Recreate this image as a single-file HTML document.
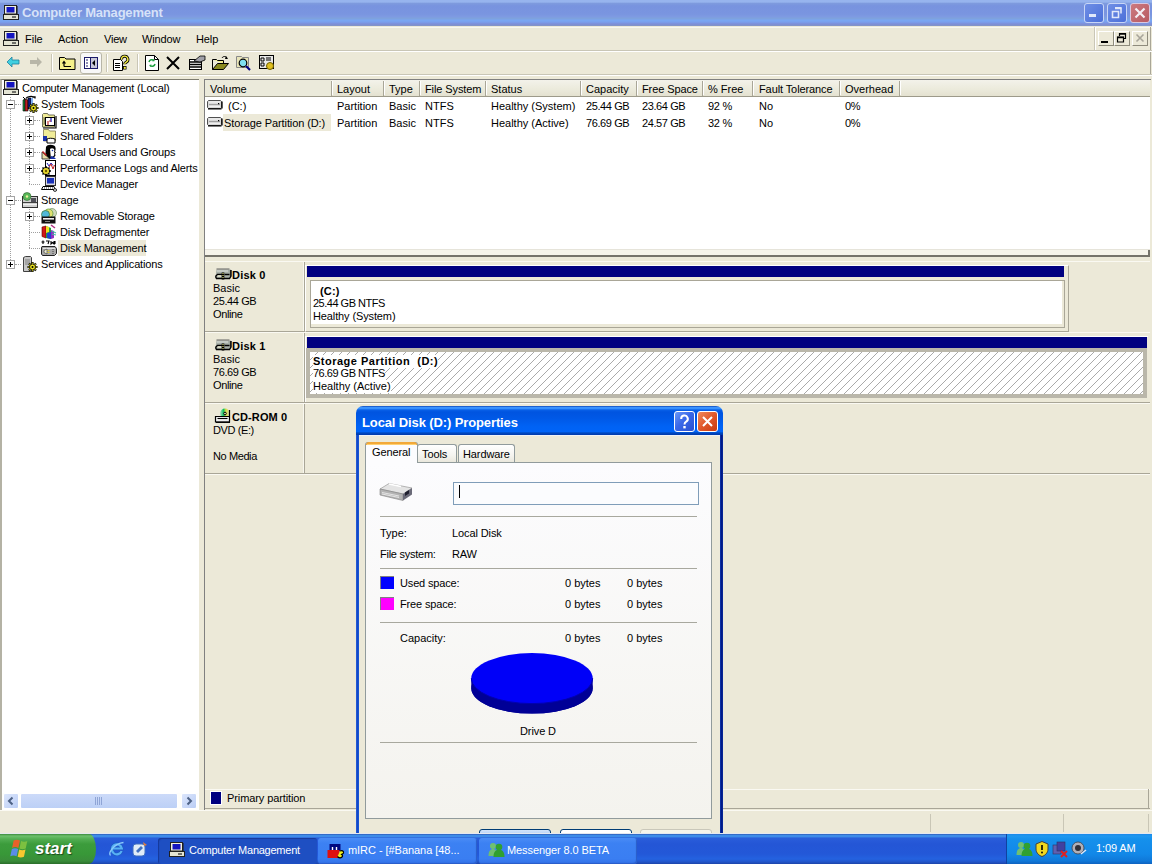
<!DOCTYPE html>
<html><head><meta charset="utf-8">
<style>
*{margin:0;padding:0;box-sizing:border-box}
html,body{width:1152px;height:864px;overflow:hidden;background:#ECE9D8;font-family:"Liberation Sans",sans-serif;font-size:11px;color:#000;position:relative}
.a{position:absolute}
.t{position:absolute;white-space:nowrap;line-height:13px}
.b{font-weight:bold}
svg{position:absolute;overflow:visible}
</style></head><body>
<!-- ============ TITLE BAR ============ -->
<div class="a" style="left:0;top:0;width:1152px;height:26px;background:linear-gradient(#97B4EE 0px,#97B4EE 2px,#7E9ADE 3.5px,#7893DF 6px,#7A95E0 14px,#7E9AE2 16.5px,#7EA2DE 18.5px,#7AA6F2 20.5px,#7AA0EE 22px,#7E8ED8 24px,#8496C4 26px)"></div>
<svg style="left:3px;top:5px" width="16" height="16" viewBox="0 0 16 16"><rect x="1.5" y="0.5" width="12" height="8.5" fill="#F0F0E0" stroke="#202020"/><path d="M14 1v8.5" stroke="#202020" stroke-width="1.2"/><rect x="3.5" y="2" width="8" height="5.5" fill="#1414C0"/><rect x="0.5" y="9.5" width="15" height="5" fill="#E4E4D4" stroke="#202020"/><path d="M9 12h4" stroke="#202020" stroke-width="1.2"/></svg>
<div class="t b" style="left:22px;top:5px;font-size:13px;line-height:16px;color:#D6E2F8;letter-spacing:-0.2px">Computer Management</div>
<div class="a" style="left:1084px;top:3px;width:20px;height:20px;border:1px solid #C8D6F6;border-radius:3px;background:linear-gradient(135deg,#6F8FE6,#4B6FD8)"></div>
<div class="a" style="left:1089px;top:14px;width:7px;height:3px;background:#E0E8FA"></div>
<div class="a" style="left:1107px;top:3px;width:20px;height:20px;border:1px solid #C8D6F6;border-radius:3px;background:linear-gradient(135deg,#6F8FE6,#4B6FD8)"></div>
<svg style="left:1110px;top:6px" width="14" height="14" viewBox="0 0 14 14"><path d="M5 2.5h6v5M2.5 5.5h6v6h-6z" fill="none" stroke="#E0E8FA" stroke-width="1.6"/><path d="M5 1.8h6.6" stroke="#E0E8FA" stroke-width="1.6"/></svg>
<div class="a" style="left:1130px;top:3px;width:20px;height:20px;border:1px solid #D8C8E0;border-radius:3px;background:linear-gradient(135deg,#CC7A80,#B85A62)"></div>
<svg style="left:1133px;top:6px" width="14" height="14" viewBox="0 0 14 14"><path d="M2.5 2.5l9 9M11.5 2.5l-9 9" stroke="#F4EEF4" stroke-width="2.2"/></svg>

<!-- ============ MENU BAR ============ -->
<div class="a" style="left:0;top:26px;width:1152px;height:25px;background:#ECE9D8;border-bottom:1px solid #C9C6B6"></div><div class="a" style="left:0;top:26.5px;width:1152px;height:1.5px;background:#F8F8F0"></div>
<div class="a" style="left:0;top:51px;width:1152px;height:1px;background:#FFF"></div>
<svg style="left:3px;top:31px" width="16" height="16" viewBox="0 0 16 16"><rect x="1.5" y="0.5" width="12" height="8.5" fill="#F0F0E0" stroke="#202020"/><path d="M14 1v8.5" stroke="#202020" stroke-width="1.2"/><rect x="3.5" y="2" width="8" height="5.5" fill="#1414C0"/><rect x="0.5" y="9.5" width="15" height="5" fill="#E4E4D4" stroke="#202020"/><path d="M9 12h4" stroke="#202020" stroke-width="1.2"/></svg>
<div class="t" style="left:25px;top:33px">File</div>
<div class="t" style="left:58px;top:33px;letter-spacing:-0.1px">Action</div>
<div class="t" style="left:104px;top:33px;letter-spacing:-0.2px">View</div>
<div class="t" style="left:142px;top:33px;letter-spacing:-0.15px">Window</div>
<div class="t" style="left:196px;top:33px;letter-spacing:-0.1px">Help</div>
<div class="a" style="left:1094px;top:27px;width:1px;height:23px;background:#C9C6B6"></div>
<div class="a" style="left:1095px;top:27px;width:1px;height:23px;background:#FFF"></div>
<!-- mdi buttons -->
<div class="a" style="left:1098px;top:31px;width:16px;height:15px;border-right:1px solid #8E8B7C;border-bottom:1px solid #8E8B7C;border-top:1px solid #fff;border-left:1px solid #fff"></div>
<div class="a" style="left:1101px;top:41px;width:7px;height:2px;background:#000"></div>
<div class="a" style="left:1114px;top:31px;width:16px;height:15px;border-right:1px solid #8E8B7C;border-bottom:1px solid #8E8B7C;border-top:1px solid #fff;border-left:1px solid #fff"></div>
<svg style="left:1116px;top:33px" width="12" height="11" viewBox="0 0 12 11"><path d="M3.5 3V0.5h6v5H7.5M1.5 4h6v5h-6z" fill="none" stroke="#000" stroke-width="1.2"/><path d="M3 1h7M1 4.5h7" stroke="#000" stroke-width="1.5"/></svg>
<div class="a" style="left:1132px;top:31px;width:16px;height:15px;border-right:1px solid #8E8B7C;border-bottom:1px solid #8E8B7C;border-top:1px solid #fff;border-left:1px solid #fff"></div>
<svg style="left:1135px;top:33px" width="10" height="10" viewBox="0 0 10 10"><path d="M1.5 1.5l7 7M8.5 1.5l-7 7" stroke="#A8A59A" stroke-width="1.6"/></svg>

<!-- ============ TOOLBAR ============ -->
<div class="a" style="left:1150px;top:27px;width:1px;height:23px;background:#A9A697"></div><div class="a" style="left:1150px;top:52px;width:1px;height:22px;background:#A9A697"></div>
<div class="a" style="left:0;top:74px;width:1152px;height:1px;background:#C9C6B6"></div>
<div class="a" style="left:0;top:75px;width:1152px;height:1px;background:#FFF"></div>
<!-- back arrow -->
<svg style="left:6px;top:56px" width="14" height="12" viewBox="0 0 14 12"><path d="M1 6l5-5v3h7v4H6v3z" fill="#40D0E0" stroke="#2080A0" stroke-width="0.8"/></svg>
<svg style="left:29px;top:56px" width="14" height="12" viewBox="0 0 14 12"><path d="M13 6L8 1v3H1v4h7v3z" fill="#B8B6A8"/></svg>
<div class="a" style="left:51px;top:54px;width:1px;height:18px;background:#C9C6B6"></div>
<div class="a" style="left:52px;top:54px;width:1px;height:18px;background:#fff"></div>
<!-- up folder -->
<svg style="left:59px;top:55px" width="17" height="15" viewBox="0 0 17 15"><path d="M0.5 2.5h5l1.5 1.5h9v10.5h-15.5z" fill="#F4F08A" stroke="#000"/><path d="M5 11.5h7M5 11.5V7M3.5 8.5L5 6.5 6.5 8.5" fill="none" stroke="#000" stroke-width="1.2"/></svg>
<!-- pressed button -->
<div class="a" style="left:80px;top:52px;width:22px;height:22px;border:1px solid #B8B6A8;border-radius:3px;background:#F8F8F8"></div>
<svg style="left:84px;top:57px" width="14" height="12" viewBox="0 0 14 12"><rect x="0.5" y="0.5" width="13" height="11" fill="#C8C8D8" stroke="#1A1A6A"/><rect x="1" y="1" width="5" height="10" fill="#fff"/><path d="M2 3h2M2 6h2M2 9h2" stroke="#1A1A6A" stroke-width="1.2"/><path d="M6.5 1v10" stroke="#1A1A6A"/><path d="M11 3v6L8 6z" fill="#000"/></svg>
<div class="a" style="left:106px;top:54px;width:1px;height:18px;background:#C9C6B6"></div>
<div class="a" style="left:107px;top:54px;width:1px;height:18px;background:#fff"></div>
<!-- help -->
<svg style="left:113px;top:55px" width="16" height="16" viewBox="0 0 16 16"><path d="M0.5 4.5h7l2 2v9h-9z" fill="#fff" stroke="#000"/><path d="M2 8.5h5M2 10.5h5M2 12.5h5" stroke="#000" stroke-width="1"/><path d="M8.5 4.5a3.2 3.2 0 1 1 4.5 2.8c-1 .5-1.3 1-1.3 2" fill="none" stroke="#000" stroke-width="3"/><path d="M8.5 4.5a3.2 3.2 0 1 1 4.5 2.8c-1 .5-1.3 1-1.3 2" fill="none" stroke="#F8F040" stroke-width="1.3"/><rect x="10" y="11" width="3.5" height="3.5" fill="#000"/><rect x="10.8" y="11.8" width="2" height="2" fill="#F8F040"/></svg>
<div class="a" style="left:137px;top:54px;width:1px;height:18px;background:#C9C6B6"></div>
<div class="a" style="left:138px;top:54px;width:1px;height:18px;background:#fff"></div>
<!-- refresh -->
<svg style="left:145px;top:55px" width="14" height="16" viewBox="0 0 14 16"><path d="M0.5 0.5h9l4 4v11h-13z" fill="#fff" stroke="#000"/><path d="M9.5 0.5v4h4" fill="none" stroke="#000"/><path d="M4 7a3 3 0 0 1 5 -1.5M10 9a3 3 0 0 1 -5 1.5" fill="none" stroke="#20A040" stroke-width="1.5"/><path d="M8 4l2 2-2.5 .5zM6 12l-2-2 2.5-.5z" fill="#20A040"/></svg>
<!-- delete -->
<svg style="left:166px;top:56px" width="14" height="14" viewBox="0 0 14 14"><path d="M1 1l12 12M13 1L1 13" stroke="#000" stroke-width="2"/></svg>
<!-- properties -->
<svg style="left:189px;top:55px" width="17" height="15" viewBox="0 0 17 15"><rect x="0.5" y="4.5" width="12" height="10" fill="#fff" stroke="#000"/><path d="M1 7h11M1 9.5h11M1 12h11" stroke="#000" stroke-width="1.4"/><path d="M5 6l6-5h5v4l-5 2z" fill="#A0A0A8" stroke="#000" stroke-width="0.8"/></svg>
<!-- open -->
<svg style="left:212px;top:55px" width="17" height="15" viewBox="0 0 17 15"><path d="M0.5 4.5h4l1 1h6v3" fill="#F4F08A" stroke="#000"/><path d="M0.5 4.5v10h11l5-6h-11l-5 6" fill="#8A8A20" stroke="#000"/><path d="M10 3c1-2 4-2 5 0" fill="none" stroke="#000"/><path d="M14 1l2 3-3 0z" fill="#000"/></svg>
<!-- search -->
<svg style="left:236px;top:55px" width="16" height="16" viewBox="0 0 16 16"><path d="M0.5 1.5h5l1 1h6v10h-12z" fill="#E8E4B8" stroke="#888"/><circle cx="7" cy="8" r="3.8" fill="#80E0F0" stroke="#000" stroke-width="1.2"/><path d="M10 11l4 4" stroke="#000080" stroke-width="2.2"/></svg>
<!-- last -->
<svg style="left:259px;top:55px" width="17" height="16" viewBox="0 0 17 16"><rect x="0.5" y="0.5" width="14" height="13" fill="#E8E8E8" stroke="#000"/><path d="M2 3h3v3H2zM2 8h3v3H2zM7 3h5M7 5h5" fill="none" stroke="#000" stroke-width="1"/><circle cx="11" cy="11" r="3.5" fill="#E0C020" stroke="#706000"/></svg>

<!-- ============ TREE PANE ============ -->
<div class="a" style="left:0;top:79px;width:199px;height:731px;background:#fff;border-top:1px solid #7E7C70;border-left:2px solid #B4B2A4"></div>
<!-- dotted tree lines -->
<div class="a" style="left:10px;top:97px;width:1px;height:167px;border-left:1px dotted #A0A0A0"></div>
<div class="a" style="left:29px;top:113px;width:1px;height:71px;border-left:1px dotted #A0A0A0"></div>
<div class="a" style="left:29px;top:209px;width:1px;height:39px;border-left:1px dotted #A0A0A0"></div>
<div class="a" style="left:15px;top:104px;width:6px;border-top:1px dotted #A0A0A0"></div>
<div class="a" style="left:15px;top:200px;width:6px;border-top:1px dotted #A0A0A0"></div>
<div class="a" style="left:15px;top:264px;width:6px;border-top:1px dotted #A0A0A0"></div>
<div class="a" style="left:34px;top:120px;width:6px;border-top:1px dotted #A0A0A0"></div>
<div class="a" style="left:34px;top:136px;width:6px;border-top:1px dotted #A0A0A0"></div>
<div class="a" style="left:34px;top:152px;width:6px;border-top:1px dotted #A0A0A0"></div>
<div class="a" style="left:34px;top:168px;width:6px;border-top:1px dotted #A0A0A0"></div>
<div class="a" style="left:29px;top:184px;width:11px;border-top:1px dotted #A0A0A0"></div>
<div class="a" style="left:34px;top:216px;width:6px;border-top:1px dotted #A0A0A0"></div>
<div class="a" style="left:29px;top:232px;width:11px;border-top:1px dotted #A0A0A0"></div>
<div class="a" style="left:29px;top:248px;width:11px;border-top:1px dotted #A0A0A0"></div>
<!-- expander boxes -->
<div class="a" style="left:6px;top:100px;width:9px;height:9px;border:1px solid #A5A5A5;background:#fff"></div><div class="a" style="left:8px;top:104px;width:5px;height:1px;background:#000"></div>
<div class="a" style="left:6px;top:196px;width:9px;height:9px;border:1px solid #A5A5A5;background:#fff"></div><div class="a" style="left:8px;top:200px;width:5px;height:1px;background:#000"></div>
<div class="a" style="left:6px;top:260px;width:9px;height:9px;border:1px solid #A5A5A5;background:#fff"></div><div class="a" style="left:8px;top:264px;width:5px;height:1px;background:#000"></div><div class="a" style="left:10px;top:262px;width:1px;height:5px;background:#000"></div>
<div class="a" style="left:25px;top:116px;width:9px;height:9px;border:1px solid #A5A5A5;background:#fff"></div><div class="a" style="left:27px;top:120px;width:5px;height:1px;background:#000"></div><div class="a" style="left:29px;top:118px;width:1px;height:5px;background:#000"></div>
<div class="a" style="left:25px;top:132px;width:9px;height:9px;border:1px solid #A5A5A5;background:#fff"></div><div class="a" style="left:27px;top:136px;width:5px;height:1px;background:#000"></div><div class="a" style="left:29px;top:134px;width:1px;height:5px;background:#000"></div>
<div class="a" style="left:25px;top:148px;width:9px;height:9px;border:1px solid #A5A5A5;background:#fff"></div><div class="a" style="left:27px;top:152px;width:5px;height:1px;background:#000"></div><div class="a" style="left:29px;top:150px;width:1px;height:5px;background:#000"></div>
<div class="a" style="left:25px;top:164px;width:9px;height:9px;border:1px solid #A5A5A5;background:#fff"></div><div class="a" style="left:27px;top:168px;width:5px;height:1px;background:#000"></div><div class="a" style="left:29px;top:166px;width:1px;height:5px;background:#000"></div>
<div class="a" style="left:25px;top:212px;width:9px;height:9px;border:1px solid #A5A5A5;background:#fff"></div><div class="a" style="left:27px;top:216px;width:5px;height:1px;background:#000"></div><div class="a" style="left:29px;top:214px;width:1px;height:5px;background:#000"></div>
<!-- tree icons -->
<svg style="left:3px;top:80px" width="16" height="16" viewBox="0 0 16 16"><rect x="1.5" y="0.5" width="12" height="8.5" fill="#F0F0E0" stroke="#202020"/><path d="M14 1v8.5" stroke="#202020" stroke-width="1.2"/><rect x="3.5" y="2" width="8" height="5.5" fill="#1414C0"/><rect x="0.5" y="9.5" width="15" height="5" fill="#E4E4D4" stroke="#202020"/><path d="M9 12h4" stroke="#202020" stroke-width="1.2"/></svg>
<svg style="left:22px;top:96px" width="16" height="16" viewBox="0 0 16 16"><path d="M1 4l2 -1v12H1z" fill="#20A040" stroke="#000" stroke-width="0.6"/><path d="M3 3l3 1v11H3z" fill="#C02020" stroke="#000" stroke-width="0.6"/><path d="M6 2h3v11H6z" fill="#102080" stroke="#000" stroke-width="0.6"/><path d="M4 2.5c1-2 6-2.5 7-1.5h2v1.5" fill="none" stroke="#000" stroke-width="1.3"/><path d="M9 2h2v8H9z" fill="#80B0F0"/><path d="M1 1l2 2" stroke="#000" stroke-width="1"/><g transform="translate(11.5 12)"><path d="M-5 0h10M0 -5v10M-3.5 -3.5l7 7M3.5 -3.5l-7 7" stroke="#000" stroke-width="2.2"/><path d="M-4.3 0h8.6M0 -4.3v8.6M-3 -3l6 6M3 -3l-6 6" stroke="#E8E020" stroke-width="1.2"/><circle r="3" fill="#E8E020" stroke="#000" stroke-width="0.8"/><circle r="1" fill="#000"/></g></svg>
<svg style="left:41px;top:112px" width="16" height="16" viewBox="0 0 16 16"><path d="M1.5 2.5l1-1h4l1 1.5h6v12h-12z" fill="#F0EC98" stroke="#505040" stroke-width="0.8"/><path d="M15 4v12H2" stroke="#000" stroke-width="1.2" fill="none"/><rect x="4.5" y="5.5" width="9" height="8" fill="#fff" stroke="#000"/><path d="M7 9v4" stroke="#C04040" stroke-width="1.3"/><path d="M10 6v4" stroke="#2020C0" stroke-width="1.3"/><path d="M8 9h2" stroke="#C04040"/><path d="M2.5 6h1M3.5 7h1M2.5 8h1M3.5 9h1M2.5 10h1M3.5 11h1M2.5 12h1" stroke="#000" stroke-width="1"/></svg>
<svg style="left:41px;top:128px" width="16" height="16" viewBox="0 0 16 16"><path d="M2.5 1.5h5l1 1.5h6v10h-12z" fill="#F0EC98" stroke="#807850" stroke-width="0.8"/><rect x="2" y="8" width="4" height="5" fill="#1830A8"/><path d="M6 11c2-1 5-1 8 0v4H6z" fill="#fff" stroke="#000" stroke-width="1"/></svg>
<svg style="left:41px;top:144px" width="16" height="16" viewBox="0 0 16 16"><path d="M5 3c1-2.5 5-3 8-1.5 2 1 2 4 1 6l1 1-1 1 .5 2c-1 1.5-3 3.5-6 3.5H4z" fill="#000"/><path d="M9 5c1-1 3-1 4 0 .5 1 .5 2 0 3l.8 1-.8.5.3 1.5c-.5 1-2 2-3.5 2z" fill="#fff"/><circle cx="11.5" cy="6.5" r="0.8" fill="#1830A8"/><path d="M10 12l3 1 2 2H9z" fill="#1830A8"/><path d="M1 8l8 7H1z" fill="#E8DCA8" stroke="#202020" stroke-width="0.8"/><path d="M1.5 7.5l4 4" stroke="#C02020" stroke-width="1.5"/></svg>
<svg style="left:41px;top:160px" width="16" height="16" viewBox="0 0 16 16"><rect x="4.5" y="0.5" width="10" height="15" fill="#fff" stroke="#000"/><path d="M6 3l2 3 2-3 2 2.5" fill="none" stroke="#2020C0" stroke-width="1"/><path d="M8 7l2-3 2 5 1.5-4" fill="none" stroke="#C02020" stroke-width="1"/><g transform="translate(5 11)"><circle r="3.6" fill="#E8D830" stroke="#000" stroke-width="1"/><path d="M-5 0h10M0 -5v10M-3.5 -3.5l7 7M3.5 -3.5l-7 7" stroke="#000" stroke-width="1.4"/><circle r="3" fill="#E8D830"/><circle r="1.2" fill="#706000"/></g></svg>
<svg style="left:41px;top:176px" width="16" height="16" viewBox="0 0 16 16"><rect x="4.5" y="0.5" width="10" height="9" fill="#D8D8E0" stroke="#303030"/><rect x="6" y="2" width="7" height="5.5" fill="#1830B8"/><path d="M2 10.5h11l1 3H0.5z" fill="#fff" stroke="#000" stroke-width="1"/><path d="M3 12h9" stroke="#000" stroke-width="0.8" stroke-dasharray="1 1"/><ellipse cx="14" cy="14" rx="1.6" ry="1.4" fill="#E0E0E0" stroke="#000" stroke-width="0.8"/></svg>
<svg style="left:22px;top:192px" width="16" height="16" viewBox="0 0 16 16"><rect x="0.5" y="4.5" width="15" height="11" fill="#D0D0D0" stroke="#303030"/><path d="M1 10.5h14" stroke="#404040"/><path d="M1 12.5h14" stroke="#F0F0F0"/><rect x="9" y="6" width="5" height="4" fill="#505058"/><circle cx="5" cy="4.5" r="4" fill="#58B858" stroke="#306030" stroke-width="0.6"/><circle cx="5" cy="4.5" r="1.2" fill="#F0F0A0"/></svg>
<svg style="left:41px;top:208px" width="16" height="16" viewBox="0 0 16 16"><circle cx="11" cy="5" r="4.5" fill="#D0D8C0" stroke="#80A070" stroke-width="0.8"/><circle cx="7.5" cy="5.5" r="4.5" fill="#E0E070" stroke="#60A040" stroke-width="0.8"/><circle cx="4.5" cy="6.5" r="4" fill="#50B8D8" stroke="#408040" stroke-width="0.8"/><rect x="0.5" y="8.5" width="14" height="7" fill="#101010"/><rect x="2" y="10" width="11" height="1.6" fill="#F0F0F0"/><rect x="4" y="13" width="5" height="1" fill="#808080"/></svg>
<svg style="left:41px;top:224px" width="16" height="16" viewBox="0 0 16 16"><path d="M1 3l4-1v12l-4-1.5z" fill="#D01818" stroke="#600000" stroke-width="0.6"/><path d="M5 2l5 2v11l-5-1z" fill="#20A040"/><path d="M5 2l3 1v5l-3 1z" fill="#F0E020"/><path d="M6 9l4-1v7l-4-1z" fill="#2040D0"/><path d="M10 6l3 1v7l-3 1z" fill="#9030C0"/><path d="M10 1l4 3" stroke="#B03080" stroke-width="1.5"/><path d="M11 7l4 2M11 10l4 1" stroke="#40C0A0" stroke-width="1.2"/></svg>
<svg style="left:41px;top:240px" width="16" height="16" viewBox="0 0 16 16"><path d="M0.5 2h3M2 0.5v3.5M5 1h3l-1 3M10 1v3l1.5-1.5L13 4V1M14 1v3" stroke="#000" stroke-width="1.1" fill="none"/><path d="M1 6.5h13l1.5 2v5l-2 2H1.5l-1-1.5v-6z" fill="#A8A8A8" stroke="#202020"/><path d="M2 8.5h12" stroke="#E0E0E0"/><path d="M3 10.5l3-1.5v5l-3-1.5z" fill="#F0F0D8" stroke="#303030" stroke-width="0.6"/><path d="M6.5 10.5h2M6.5 12.5h2" stroke="#D8C830" stroke-width="1"/><path d="M12 9v5" stroke="#404040" stroke-dasharray="1 1"/></svg>
<svg style="left:22px;top:256px" width="16" height="16" viewBox="0 0 16 16"><path d="M1.5 1.5l2-1h5l1 1v14h-8z" fill="#C8C8C8" stroke="#404040"/><path d="M3 4h5M3 6h5M3 8h5" stroke="#808080"/><g transform="translate(10.5 11)"><path d="M-5 0h10M0 -5v10M-3.5 -3.5l7 7M3.5 -3.5l-7 7" stroke="#000" stroke-width="2.2"/><path d="M-4.3 0h8.6M0 -4.3v8.6M-3 -3l6 6M3 -3l-6 6" stroke="#E8E020" stroke-width="1.2"/><circle r="3" fill="#E8E020" stroke="#000" stroke-width="0.8"/><circle r="1" fill="#000"/></g></svg>
<!-- tree text -->
<div class="t" style="left:22px;top:82px;letter-spacing:-0.18px">Computer Management (Local)</div>
<div class="t" style="left:41px;top:98px;letter-spacing:-0.15px">System Tools</div>
<div class="t" style="left:60px;top:114px;letter-spacing:-0.15px">Event Viewer</div>
<div class="t" style="left:60px;top:130px;letter-spacing:-0.15px">Shared Folders</div>
<div class="t" style="left:60px;top:146px;letter-spacing:-0.15px">Local Users and Groups</div>
<div class="t" style="left:60px;top:162px;letter-spacing:-0.16px">Performance Logs and Alerts</div>
<div class="t" style="left:60px;top:178px;letter-spacing:-0.15px">Device Manager</div>
<div class="t" style="left:41px;top:194px;letter-spacing:-0.15px">Storage</div>
<div class="t" style="left:60px;top:210px;letter-spacing:-0.15px">Removable Storage</div>
<div class="t" style="left:60px;top:226px;letter-spacing:-0.15px">Disk Defragmenter</div>
<div class="a" style="left:58px;top:240px;width:88px;height:16px;background:#ECE9D8"></div>
<div class="t" style="left:60px;top:242px;letter-spacing:-0.15px">Disk Management</div>
<div class="t" style="left:41px;top:258px;letter-spacing:-0.15px">Services and Applications</div>
<!-- tree h-scrollbar -->
<div class="a" style="left:2px;top:793px;width:196px;height:16px;background:#FEFEFB"></div>
<div class="a" style="left:3px;top:793px;width:16px;height:16px;border-radius:2px;background:linear-gradient(135deg,#DCE6FC,#BACDF5);border:1px solid #fff"></div>
<svg style="left:7px;top:797px" width="8" height="8" viewBox="0 0 8 8"><path d="M5.5 0.5L2 4l3.5 3.5" fill="none" stroke="#4D6185" stroke-width="2"/></svg>
<div class="a" style="left:20px;top:793px;width:158px;height:16px;border-radius:2px;background:linear-gradient(#CCDAF9,#BCD0F6);border:1px solid #fff"></div>
<div class="a" style="left:95px;top:797px;width:7px;height:8px;background:repeating-linear-gradient(90deg,#8FA5D6 0 1px,transparent 1px 2px)"></div>
<div class="a" style="left:181px;top:793px;width:16px;height:16px;border-radius:2px;background:linear-gradient(135deg,#DCE6FC,#BACDF5);border:1px solid #fff"></div>
<svg style="left:185px;top:797px" width="8" height="8" viewBox="0 0 8 8"><path d="M2.5 0.5L6 4l-3.5 3.5" fill="none" stroke="#4D6185" stroke-width="2"/></svg>

<!-- ============ RIGHT PANE ============ -->
<div class="a" style="left:204px;top:79px;width:947px;height:732px;border-top:1px solid #808080;border-left:1px solid #808080;background:#ECE9D8"></div>
<div class="a" style="left:205px;top:80px;width:945px;height:170px;background:#fff"></div>
<!-- list header -->
<div class="a" style="left:205px;top:80px;width:945px;height:17px;background:linear-gradient(#F3F2EA,#EBEADB 60%,#E4E1D0);border-bottom:1px solid #A8A597"></div>
<div class="a" style="left:205px;top:96px;width:945px;height:1px;background:#9D9A8A"></div>
<div class="a" style="left:205px;top:80px;width:126px;height:16px;background:#EBEADB"></div>
<div class="a" style="left:331px;top:81px;width:1px;height:15px;background:#A9A697"></div><div class="a" style="left:332px;top:81px;width:1px;height:14px;background:#FFFFFF"></div>
<div class="a" style="left:383px;top:81px;width:1px;height:15px;background:#A9A697"></div><div class="a" style="left:384px;top:81px;width:1px;height:14px;background:#FFFFFF"></div>
<div class="a" style="left:419px;top:81px;width:1px;height:15px;background:#A9A697"></div><div class="a" style="left:420px;top:81px;width:1px;height:14px;background:#FFFFFF"></div>
<div class="a" style="left:485px;top:81px;width:1px;height:15px;background:#A9A697"></div><div class="a" style="left:486px;top:81px;width:1px;height:14px;background:#FFFFFF"></div>
<div class="a" style="left:580px;top:81px;width:1px;height:15px;background:#A9A697"></div><div class="a" style="left:581px;top:81px;width:1px;height:14px;background:#FFFFFF"></div>
<div class="a" style="left:636px;top:81px;width:1px;height:15px;background:#A9A697"></div><div class="a" style="left:637px;top:81px;width:1px;height:14px;background:#FFFFFF"></div>
<div class="a" style="left:702px;top:81px;width:1px;height:15px;background:#A9A697"></div><div class="a" style="left:703px;top:81px;width:1px;height:14px;background:#FFFFFF"></div>
<div class="a" style="left:752px;top:81px;width:1px;height:15px;background:#A9A697"></div><div class="a" style="left:753px;top:81px;width:1px;height:14px;background:#FFFFFF"></div>
<div class="a" style="left:839px;top:81px;width:1px;height:15px;background:#A9A697"></div><div class="a" style="left:840px;top:81px;width:1px;height:14px;background:#FFFFFF"></div>
<div class="a" style="left:899px;top:81px;width:1px;height:15px;background:#A9A697"></div><div class="a" style="left:900px;top:81px;width:1px;height:14px;background:#FFFFFF"></div>

<div class="t" style="left:210px;top:83px">Volume</div>
<div class="t" style="left:337px;top:83px">Layout</div>
<div class="t" style="left:389px;top:83px">Type</div>
<div class="t" style="left:425px;top:83px;letter-spacing:-0.1px">File System</div>
<div class="t" style="left:491px;top:83px">Status</div>
<div class="t" style="left:586px;top:83px">Capacity</div>
<div class="t" style="left:642px;top:83px;letter-spacing:-0.1px">Free Space</div>
<div class="t" style="left:708px;top:83px">% Free</div>
<div class="t" style="left:759px;top:83px;letter-spacing:-0.1px">Fault Tolerance</div>
<div class="t" style="left:845px;top:83px">Overhead</div>
<!-- rows -->
<svg style="left:207px;top:100px" width="16" height="10" viewBox="0 0 16 10"><path d="M1.5 0.5h12l1 1v6l-1 1h-12l-1-1v-6z" fill="#D8D8D8" stroke="#505050"/><path d="M1 8.8h13.5M15 1.5v7" stroke="#000" stroke-width="1.3"/><path d="M2 2h11" stroke="#F8F8F8"/><path d="M2 4.5h11" stroke="#A0A0A0"/><path d="M2 6.5h11" stroke="#F0F0F0"/><rect x="11" y="3" width="1.2" height="1.2" fill="#000"/></svg>
<div class="a" style="left:223px;top:114px;width:108px;height:17px;background:#ECE9D8"></div>
<svg style="left:207px;top:117px" width="16" height="10" viewBox="0 0 16 10"><path d="M1.5 0.5h12l1 1v6l-1 1h-12l-1-1v-6z" fill="#D8D8D8" stroke="#505050"/><path d="M1 8.8h13.5M15 1.5v7" stroke="#000" stroke-width="1.3"/><path d="M2 2h11" stroke="#F8F8F8"/><path d="M2 4.5h11" stroke="#A0A0A0"/><path d="M2 6.5h11" stroke="#F0F0F0"/><rect x="11" y="3" width="1.2" height="1.2" fill="#000"/></svg>
<div class="t" style="left:228px;top:100px">(C:)</div>
<div class="t" style="left:224px;top:117px;letter-spacing:-0.1px">Storage Partition (D:)</div>
<div class="t" style="left:337px;top:100px">Partition</div>
<div class="t" style="left:337px;top:117px">Partition</div>
<div class="t" style="left:389px;top:100px">Basic</div>
<div class="t" style="left:389px;top:117px">Basic</div>
<div class="t" style="left:425px;top:100px">NTFS</div>
<div class="t" style="left:425px;top:117px">NTFS</div>
<div class="t" style="left:491px;top:100px">Healthy (System)</div>
<div class="t" style="left:491px;top:117px">Healthy (Active)</div>
<div class="t" style="left:586px;top:100px;letter-spacing:-0.4px">25.44 GB</div>
<div class="t" style="left:586px;top:117px;letter-spacing:-0.4px">76.69 GB</div>
<div class="t" style="left:642px;top:100px;letter-spacing:-0.4px">23.64 GB</div>
<div class="t" style="left:642px;top:117px;letter-spacing:-0.4px">24.57 GB</div>
<div class="t" style="left:708px;top:100px;letter-spacing:-0.3px">92 %</div>
<div class="t" style="left:708px;top:117px;letter-spacing:-0.3px">32 %</div>
<div class="t" style="left:759px;top:100px">No</div>
<div class="t" style="left:759px;top:117px">No</div>
<div class="t" style="left:845px;top:100px;letter-spacing:-0.3px">0%</div>
<div class="t" style="left:845px;top:117px;letter-spacing:-0.3px">0%</div>
<!-- splitter -->
<div class="a" style="left:205px;top:249px;width:945px;height:1px;background:#E6E4DA"></div>
<div class="a" style="left:205px;top:250px;width:945px;height:5px;background:#F6F4EA"></div>
<div class="a" style="left:205px;top:255px;width:945px;height:2px;background:#75736A"></div>
<div class="a" style="left:1148px;top:250px;width:2px;height:7px;background:#75736A"></div>
<!-- disk rows -->
<!-- disk 0 row -->
<div class="a" style="left:205px;top:261px;width:945px;height:1px;background:#FAF9F2"></div>
<div class="a" style="left:205px;top:331px;width:99px;height:1px;background:#A9A697"></div>
<div class="a" style="left:303px;top:262px;width:1px;height:69px;background:#F8F7EE"></div>
<div class="a" style="left:304px;top:262px;width:1px;height:70px;background:#A9A697"></div>
<div class="a" style="left:305px;top:265px;width:764px;height:67px;border-top:1px solid #fff;border-left:1px solid #fff;border-right:1px solid #A9A697;border-bottom:1px solid #A9A697"></div>
<div class="a" style="left:307px;top:266px;width:757px;height:11px;background:#000080"></div>
<div class="a" style="left:310px;top:280px;width:755px;height:48px;border:1px solid #A9A697;border-right-color:#A9A697"></div>
<div class="a" style="left:311px;top:281px;width:751px;height:43px;background:#fff"></div>
<!-- disk 1 row -->
<div class="a" style="left:205px;top:332px;width:945px;height:1px;background:#FAF9F2"></div>
<div class="a" style="left:205px;top:402px;width:945px;height:1px;background:#A9A697"></div>
<div class="a" style="left:303px;top:333px;width:1px;height:69px;background:#F8F7EE"></div>
<div class="a" style="left:304px;top:333px;width:1px;height:69px;background:#A9A697"></div>
<div class="a" style="left:305px;top:336px;width:1px;height:66px;background:#fff"></div>
<div class="a" style="left:305px;top:336px;width:843px;height:1px;background:#fff"></div>
<div class="a" style="left:307px;top:337px;width:840px;height:11px;background:#000080"></div>
<div class="a" style="left:306px;top:348px;width:841px;height:50px;background:#BAB7AA"></div>
<svg style="left:310px;top:352px" width="833" height="42" viewBox="0 0 833 42"><defs><pattern id="hatch" patternUnits="userSpaceOnUse" width="8" height="8" x="0" y="0"><rect width="8" height="8" fill="#fff"/><path d="M-1 9L9 -1M-5 5L5 -5M3 13L13 3" stroke="#A0A0A0" stroke-width="0.9"/></pattern></defs><rect x="0" y="0" width="833" height="42" fill="url(#hatch)"/></svg>
<!-- cd-rom row -->
<div class="a" style="left:205px;top:403px;width:945px;height:1px;background:#FAF9F2"></div>
<div class="a" style="left:205px;top:473px;width:945px;height:1px;background:#A9A697"></div>
<div class="a" style="left:303px;top:404px;width:1px;height:69px;background:#F8F7EE"></div>
<div class="a" style="left:304px;top:404px;width:1px;height:69px;background:#A9A697"></div>
<div class="a" style="left:205px;top:474px;width:945px;height:1px;background:#FAF9F2"></div>
<!-- disk labels -->
<svg style="left:215px;top:268px" width="17" height="12" viewBox="0 0 17 12"><path d="M1.5 1.5h14.5v7l-1.5 2H1.5l-1-2z" fill="#A8B0A8"/><path d="M1.5 1h13" stroke="#606060" stroke-width="1"/><path d="M2 3h11" stroke="#E0E4E0" stroke-width="1"/><path d="M0.5 8.5l2-2h5M9.5 6.5h5M0.5 8.5l1 2h13l1.5-2.5v-6" fill="none" stroke="#000" stroke-width="1.4"/><path d="M2.5 8h4" stroke="#E8E8D0" stroke-width="1.5"/><path d="M8 4.5v7" stroke="#000" stroke-width="2.6"/><path d="M8 5v6" stroke="#D8D870" stroke-width="1.2" stroke-dasharray="1 1"/><path d="M15.5 2.5v6" stroke="#000" stroke-width="1.2" stroke-dasharray="1 1"/></svg>
<div class="t b" style="left:232px;top:269px;letter-spacing:0.2px">Disk 0</div>
<div class="t" style="left:213px;top:282px">Basic</div>
<div class="t" style="left:213px;top:295px;letter-spacing:-0.4px">25.44 GB</div>
<div class="t" style="left:213px;top:308px;letter-spacing:-0.38px">Online</div>
<svg style="left:215px;top:339px" width="17" height="12" viewBox="0 0 17 12"><path d="M1.5 1.5h14.5v7l-1.5 2H1.5l-1-2z" fill="#A8B0A8"/><path d="M1.5 1h13" stroke="#606060" stroke-width="1"/><path d="M2 3h11" stroke="#E0E4E0" stroke-width="1"/><path d="M0.5 8.5l2-2h5M9.5 6.5h5M0.5 8.5l1 2h13l1.5-2.5v-6" fill="none" stroke="#000" stroke-width="1.4"/><path d="M2.5 8h4" stroke="#E8E8D0" stroke-width="1.5"/><path d="M8 4.5v7" stroke="#000" stroke-width="2.6"/><path d="M8 5v6" stroke="#D8D870" stroke-width="1.2" stroke-dasharray="1 1"/><path d="M15.5 2.5v6" stroke="#000" stroke-width="1.2" stroke-dasharray="1 1"/></svg>
<div class="t b" style="left:232px;top:340px;letter-spacing:0.2px">Disk 1</div>
<div class="t" style="left:213px;top:353px">Basic</div>
<div class="t" style="left:213px;top:366px;letter-spacing:-0.4px">76.69 GB</div>
<div class="t" style="left:213px;top:379px;letter-spacing:-0.38px">Online</div>
<svg style="left:215px;top:407px" width="16" height="16" viewBox="0 0 16 16"><defs><linearGradient id="cdg" x1="0" y1="0" x2="1" y2="0"><stop offset="0" stop-color="#B0E0C0"/><stop offset="0.35" stop-color="#10C060"/><stop offset="0.6" stop-color="#E0E040"/><stop offset="1" stop-color="#D0D8D0"/></linearGradient></defs><circle cx="10" cy="6.5" r="5" fill="url(#cdg)"/><path d="M14.5 3v6" stroke="#000" stroke-width="1.2"/><circle cx="10" cy="6.5" r="1.3" fill="#F0F0C0" stroke="#000" stroke-width="1"/><path d="M0.5 9.5h14v5.5H0.5z" fill="#F0F0F0" stroke="#000" stroke-width="1.2"/><path d="M2.5 11.5h10" stroke="#000" stroke-width="1.1"/><path d="M1 15.3h14" stroke="#000" stroke-width="1.3"/></svg>
<div class="t b" style="left:232px;top:411px;letter-spacing:0.1px">CD-ROM 0</div>
<div class="t" style="left:213px;top:424px;letter-spacing:-0.4px">DVD (E:)</div>
<div class="t" style="left:213px;top:450px;letter-spacing:-0.4px">No Media</div>
<!-- partition text -->
<div class="t b" style="left:320px;top:285px;letter-spacing:0.2px">(C:)</div>
<div class="t" style="left:313px;top:297px;letter-spacing:-0.5px">25.44 GB NTFS</div>
<div class="t" style="left:313px;top:310px;letter-spacing:-0.12px">Healthy (System)</div>
<div class="t b" style="left:313px;top:355px;letter-spacing:0.5px;background:#fff">Storage Partition &nbsp;(D:)</div>
<div class="t" style="left:313px;top:367px;letter-spacing:-0.5px;background:#fff">76.69 GB NTFS</div>
<div class="t" style="left:313px;top:380px;background:#fff">Healthy (Active)</div>
<!-- legend -->
<div class="a" style="left:205px;top:789px;width:945px;height:1px;background:#FAF9F2"></div>
<div class="a" style="left:210px;top:791px;width:12px;height:14px;background:#000080;border:1px solid #fff"></div>
<div class="t" style="left:227px;top:791.5px;letter-spacing:-0.1px">Primary partition</div>
<div class="a" style="left:205px;top:808px;width:945px;height:1px;background:#A9A697"></div><div class="a" style="left:0px;top:810px;width:1152px;height:1px;background:#FAF9F2"></div><div class="a" style="left:0px;top:811px;width:1152px;height:1px;background:#C9C6B6"></div>
<div class="a" style="left:1148px;top:789px;width:1px;height:20px;background:#A9A697"></div>
<!-- status bar -->
<div class="a" style="left:0;top:811px;width:1152px;height:23px;background:#ECE9D8"></div>
<div class="a" style="left:930px;top:814px;width:1px;height:18px;background:#C9C6B6"></div>
<div class="a" style="left:1063px;top:814px;width:1px;height:18px;background:#C9C6B6"></div>
<div class="a" style="left:1148px;top:814px;width:1px;height:18px;background:#C9C6B6"></div>

<!-- ============ DIALOG ============ -->
<div class="a" style="left:356px;top:406px;width:367px;height:440px;border-radius:7px 7px 0 0;background:linear-gradient(#0A3CA8 0px,#3C94FF 1.2px,#3890FC 2.5px,#0860E8 4px,#0054E0 6px,#0058E6 12px,#0062F4 20px,#0064F8 25.5px,#0048C0 27px,#003DB0 28.5px,#0040C8 30px,#0040C8 100%)"></div>
<div class="a" style="left:359px;top:435px;width:361px;height:410px;background:#ECE9D8"></div><div class="a" style="left:359px;top:435px;width:361px;height:1px;background:#F0F2F6"></div>
<div class="a" style="left:356px;top:435px;width:3px;height:410px;background:linear-gradient(90deg,#2A60D8,#1248C8 50%,#1A58D8)"></div><div class="a" style="left:720px;top:435px;width:3px;height:410px;background:linear-gradient(90deg,#1038B0,#001A88 50%,#0A2A9C)"></div>
<div class="t b" style="left:362px;top:414.7px;font-size:13px;line-height:16px;color:#fff;letter-spacing:-0.12px">Local Disk (D:) Properties</div>
<div class="a" style="left:674px;top:411px;width:21px;height:21px;border:1px solid #fff;border-radius:3px;background:linear-gradient(135deg,#6A98F8,#3A68E8 45%,#2A50D0)"></div>
<svg style="left:674px;top:411px" width="21" height="21" viewBox="0 0 21 21"><path d="M7.2 8a3.3 3.3 0 1 1 5 2.6c-1.3 .8-1.7 1.3-1.7 2.8" fill="none" stroke="#fff" stroke-width="2"/><rect x="9.3" y="15" width="2.4" height="2.4" fill="#fff"/></svg>
<div class="a" style="left:697px;top:411px;width:21px;height:21px;border:1px solid #fff;border-radius:3px;background:linear-gradient(135deg,#F08A5C,#E0582A 50%,#C83A10)"></div>
<svg style="left:697px;top:411px" width="21" height="21" viewBox="0 0 21 21"><path d="M6 6l9 9M15 6l-9 9" stroke="#fff" stroke-width="2"/></svg>
<!-- tabs -->
<div class="a" style="left:417px;top:444px;width:40px;height:19px;border:1px solid #919B9C;border-bottom:none;border-radius:3px 3px 0 0;background:linear-gradient(#FFFFFF,#F4F3EE 60%,#E8E6DA)"></div>
<div class="t" style="left:422px;top:448px;letter-spacing:-0.1px">Tools</div>
<div class="a" style="left:458px;top:444px;width:57px;height:19px;border:1px solid #919B9C;border-bottom:none;border-radius:3px 3px 0 0;background:linear-gradient(#FFFFFF,#F4F3EE 60%,#E8E6DA)"></div>
<div class="t" style="left:463px;top:448px;letter-spacing:-0.1px">Hardware</div>
<div class="a" style="left:365px;top:462px;width:347px;height:357px;border:1px solid #919B9C;background:linear-gradient(#FCFCFE,#F4F3EE)"></div>
<div class="a" style="left:365px;top:442px;width:53px;height:21px;border:1px solid #919B9C;border-bottom:none;border-radius:3px 3px 0 0;background:#FCFCFE"></div>
<div class="a" style="left:366px;top:442px;width:51px;height:3px;border-radius:3px 3px 0 0;background:#F2A838"></div>
<div class="a" style="left:367px;top:444px;width:49px;height:1px;background:#FFD070"></div>
<div class="t" style="left:372px;top:446px;letter-spacing:-0.1px">General</div>
<!-- drive icon -->
<svg style="left:379px;top:482px" width="34" height="20" viewBox="0 0 34 20"><path d="M1 7L10 1.5L33 6L24 12z" fill="#E4E4E4" stroke="#9A9A9A" stroke-width="0.7"/><path d="M1 7L24 12V18.5L1 13z" fill="#B4B4B4" stroke="#808080" stroke-width="0.6"/><path d="M24 12L33 6V12.5L24 18.5z" fill="#6A6A78"/><path d="M26 10.5l4-2.5v3.5l-4 2.5z" fill="#202030"/><path d="M3 10.5l17 3.5M3 12l17 3.5" stroke="#F0F0F0" stroke-width="0.8"/><path d="M10 2l12 2.5" stroke="#FFFFFF" stroke-width="1.5"/></svg>
<!-- name box -->
<div class="a" style="left:453px;top:482px;width:246px;height:23px;border:1px solid #7F9DB9;background:#FBFCFE"></div>
<div class="a" style="left:459px;top:485px;width:1px;height:13px;background:#000"></div>
<div class="a" style="left:380px;top:516px;width:317px;height:1px;background:#A8A89E"></div>
<div class="t" style="left:380px;top:527px">Type:</div>
<div class="t" style="left:452px;top:527px;letter-spacing:-0.1px">Local Disk</div>
<div class="t" style="left:380px;top:548px;letter-spacing:-0.25px">File system:</div>
<div class="t" style="left:452px;top:548px;letter-spacing:-0.2px">RAW</div>
<div class="a" style="left:380px;top:568px;width:317px;height:1px;background:#A8A89E"></div>
<div class="a" style="left:380px;top:576px;width:14px;height:13px;background:#0000FF;border-top:1px solid #808080;border-left:1px solid #808080"></div>
<div class="t" style="left:400px;top:577px;letter-spacing:-0.15px">Used space:</div>
<div class="t" style="left:565px;top:577px">0 bytes</div>
<div class="t" style="left:627px;top:577px">0 bytes</div>
<div class="a" style="left:380px;top:597px;width:14px;height:13px;background:#FF00FF;border-top:1px solid #808080;border-left:1px solid #808080"></div>
<div class="t" style="left:400px;top:598px;letter-spacing:-0.15px">Free space:</div>
<div class="t" style="left:565px;top:598px">0 bytes</div>
<div class="t" style="left:627px;top:598px">0 bytes</div>
<div class="a" style="left:380px;top:622px;width:317px;height:1px;background:#A8A89E"></div>
<div class="t" style="left:400px;top:632px">Capacity:</div>
<div class="t" style="left:565px;top:632px">0 bytes</div>
<div class="t" style="left:627px;top:632px">0 bytes</div>
<!-- pie -->
<svg style="left:460px;top:645px" width="150" height="80" viewBox="0 0 150 80"><path d="M11.3 33.3v10A60.7 25.3 0 0 0 132.7 43.3v-10z" fill="#000096"/><ellipse cx="72" cy="43.3" rx="60.7" ry="25.3" fill="#000096"/><ellipse cx="72" cy="33.3" rx="60.7" ry="25.3" fill="#0000F8"/><path d="M11.3 33.3A60.7 25.3 0 0 0 132.7 33.3" fill="none" stroke="#0000B0" stroke-width="1"/></svg>
<div class="t" style="left:520px;top:725px;letter-spacing:-0.1px">Drive D</div>
<div class="a" style="left:380px;top:742px;width:317px;height:1px;background:#A8A89E"></div>
<!-- buttons (cut) -->
<div class="a" style="left:479px;top:829px;width:72px;height:23px;border:1px solid #003C74;border-radius:3px;background:linear-gradient(#D0E2FA,#C0D8F8 3px,#F4F4F0 6px)"></div>
<div class="a" style="left:560px;top:829px;width:72px;height:23px;border:1px solid #003C74;border-radius:3px;background:#FFFFFF"></div>
<div class="a" style="left:640px;top:829px;width:72px;height:23px;border:1px solid #C9C7BA;border-radius:3px;background:#F5F4EA"></div>

<!-- ============ TASKBAR ============ -->
<div class="a" style="left:0;top:834px;width:1152px;height:30px;background:linear-gradient(#2B55B0 0px,#3E8CE8 1.2px,#3E8CE8 2.8px,#2A5EDA 4px,#2456D6 10px,#2358D8 20px,#2462E0 25px,#2255C8 28px,#1C44A8 30px)"></div>
<div class="a" style="left:0;top:833px;width:1152px;height:1px;background:#E4E8F0"></div>
<!-- start button -->
<div class="a" style="left:0;top:834px;width:96px;height:30px;border-radius:0 7px 7px 0 / 0 15px 15px 0;background:linear-gradient(#3C8A3C 0px,#6CC06C 2px,#52AE52 5px,#3C9C3C 10px,#389838 20px,#3A8C3A 27px,#2A6E2A 30px)"></div>
<svg style="left:10px;top:839px" width="20" height="19" viewBox="0 0 20 19"><g transform="translate(0.5 0.5) scale(1.05)"><path d="M3 1c2-1 4-1 6 0l-1.5 7c-2-1-4-1-6 0z" fill="#E8602A"/><path d="M10 1.5c2 1 4 1 6 0l-1.5 7c-2 1-4 1-6 0z" fill="#7CC040"/><path d="M1.3 9c2-1 4-1 6 0l-1.5 7c-2-1-4-1-6 0z" fill="#5A8CE8"/><path d="M8.3 9.5c2 1 4 1 6 0l-1.5 7c-2 1-4 1-6 0z" fill="#F8C830"/></g></svg>
<div class="t b" style="left:35px;top:839px;font-size:17px;line-height:20px;font-style:italic;color:#fff;text-shadow:1px 1px 1px #1A4A1A">start</div>
<!-- quick launch -->
<svg style="left:108px;top:841px" width="17" height="16" viewBox="0 0 17 16"><path d="M13.6 10A5 5 0 1 1 13.8 7.5H4.5" fill="none" stroke="#1C5CC0" stroke-width="3.4"/><path d="M13.6 10A5 5 0 1 1 13.8 7.5H4.5" fill="none" stroke="#58B0F4" stroke-width="2.2"/><path d="M2.5 14.5C0 12 6 2.5 15.5 1.5" fill="none" stroke="#8CCAFA" stroke-width="1.3"/></svg>
<svg style="left:131px;top:841px" width="17" height="16" viewBox="0 0 17 16"><rect x="2" y="3" width="12" height="12" rx="3" fill="#E0ECF8" stroke="#4070C0"/><path d="M5 10l5-5 2 2-5 5z" fill="#4070C0"/><path d="M12 1l4 3-3 1z" fill="#E08040"/></svg>
<!-- task buttons -->
<div class="a" style="left:158px;top:838px;width:159px;height:26px;border-radius:3px;background:#1E4FC2;box-shadow:inset 1px 1px 1px #16389A"></div>
<svg style="left:169px;top:842px" width="16" height="16" viewBox="0 0 16 16"><rect x="1.5" y="0.5" width="12" height="8.5" fill="#F0F0E0" stroke="#202020"/><path d="M14 1v8.5" stroke="#202020" stroke-width="1.2"/><rect x="3.5" y="2" width="8" height="5.5" fill="#1414C0"/><rect x="0.5" y="9.5" width="15" height="5" fill="#E4E4D4" stroke="#202020"/><path d="M9 12h4" stroke="#202020" stroke-width="1.2"/></svg>
<div class="t" style="left:189px;top:844px;color:#fff;letter-spacing:-0.25px">Computer Management</div>
<div class="a" style="left:318px;top:838px;width:159px;height:26px;border-radius:3px;background:linear-gradient(#4A8CF6,#3C81F3 20%,#3A7EF2 80%,#3270E6);box-shadow:inset -1px -1px 1px #2A5CC8"></div>
<svg style="left:327px;top:841px" width="18" height="17" viewBox="0 0 18 17"><rect x="2.5" y="3" width="11" height="7" fill="#000880"/><path d="M5.5 6v4M9.5 6v4" stroke="#fff" stroke-width="1.4"/><rect x="0.5" y="9" width="12" height="8" fill="#E01010"/><path d="M13 10c2-1 4 0 3.5 2-.5 1-1.5 1-2 1.5 1 .5 1.5 1.5 .5 2.5-1 1-3 1-4.5-.5" fill="#F0F020" stroke="#000" stroke-width="1.2"/></svg>
<div class="t" style="left:348px;top:844px;color:#fff;letter-spacing:-0.05px">mIRC - [#Banana [48...</div>
<div class="a" style="left:479px;top:838px;width:158px;height:26px;border-radius:3px;background:linear-gradient(#4A8CF6,#3C81F3 20%,#3A7EF2 80%,#3270E6);box-shadow:inset -1px -1px 1px #2A5CC8"></div>
<svg style="left:488px;top:842px" width="17" height="16" viewBox="0 0 17 16"><circle cx="5" cy="4" r="3" fill="#70C070"/><path d="M0.5 14c0-5 2-7 4.5-7s4.5 2 4.5 7z" fill="#70C070"/><circle cx="11" cy="5" r="3.3" fill="#30A030"/><path d="M5.5 15c0-5.5 2.5-7.5 5.5-7.5s5.5 2 5.5 7.5z" fill="#30A030"/></svg>
<div class="t" style="left:507px;top:844px;color:#fff;letter-spacing:-0.1px">Messenger 8.0 BETA</div>
<!-- tray -->
<div class="a" style="left:1006px;top:834px;width:146px;height:30px;background:linear-gradient(#1A88E8 0px,#1E98F0 2px,#1590EC 5px,#1288E8 20px,#1078D8 27px,#0F62C0 30px);border-left:1px solid #1042A0"></div>
<svg style="left:1016px;top:841px" width="17" height="16" viewBox="0 0 17 16"><circle cx="5" cy="4" r="3" fill="#70C070"/><path d="M0.5 14c0-5 2-7 4.5-7s4.5 2 4.5 7z" fill="#70C070"/><circle cx="11" cy="5" r="3.3" fill="#30A030"/><path d="M5.5 15c0-5.5 2.5-7.5 5.5-7.5s5.5 2 5.5 7.5z" fill="#30A030"/></svg>
<svg style="left:1035px;top:841px" width="14" height="16" viewBox="0 0 14 16"><path d="M7 0.5l6 2.5v5c0 4-3 6.5-6 7.5C4 14.5 1 12 1 8V3z" fill="#F0D820" stroke="#404040"/><path d="M7 4v5" stroke="#000" stroke-width="1.6"/><circle cx="7" cy="11.5" r="0.9" fill="#000"/></svg>
<svg style="left:1052px;top:841px" width="17" height="17" viewBox="0 0 17 17"><rect x="1" y="4" width="8" height="9" fill="#6060B0" stroke="#303060" stroke-width="0.6"/><rect x="5" y="1" width="8" height="9" fill="#4040A0" stroke="#303060" stroke-width="0.6"/><path d="M9 10l6 6M15 10l-6 6" stroke="#E02020" stroke-width="2"/></svg>
<svg style="left:1071px;top:841px" width="17" height="17" viewBox="0 0 17 17"><circle cx="7" cy="7" r="6" fill="#B0B0B8" stroke="#404048" stroke-width="0.8"/><circle cx="7" cy="7" r="3" fill="#303038"/><path d="M10 13l5-4" stroke="#E0E8F8" stroke-width="1.5"/></svg>
<div class="t" style="left:1096px;top:842px;color:#fff;letter-spacing:-0.1px">1:09 AM</div>
</body></html>
